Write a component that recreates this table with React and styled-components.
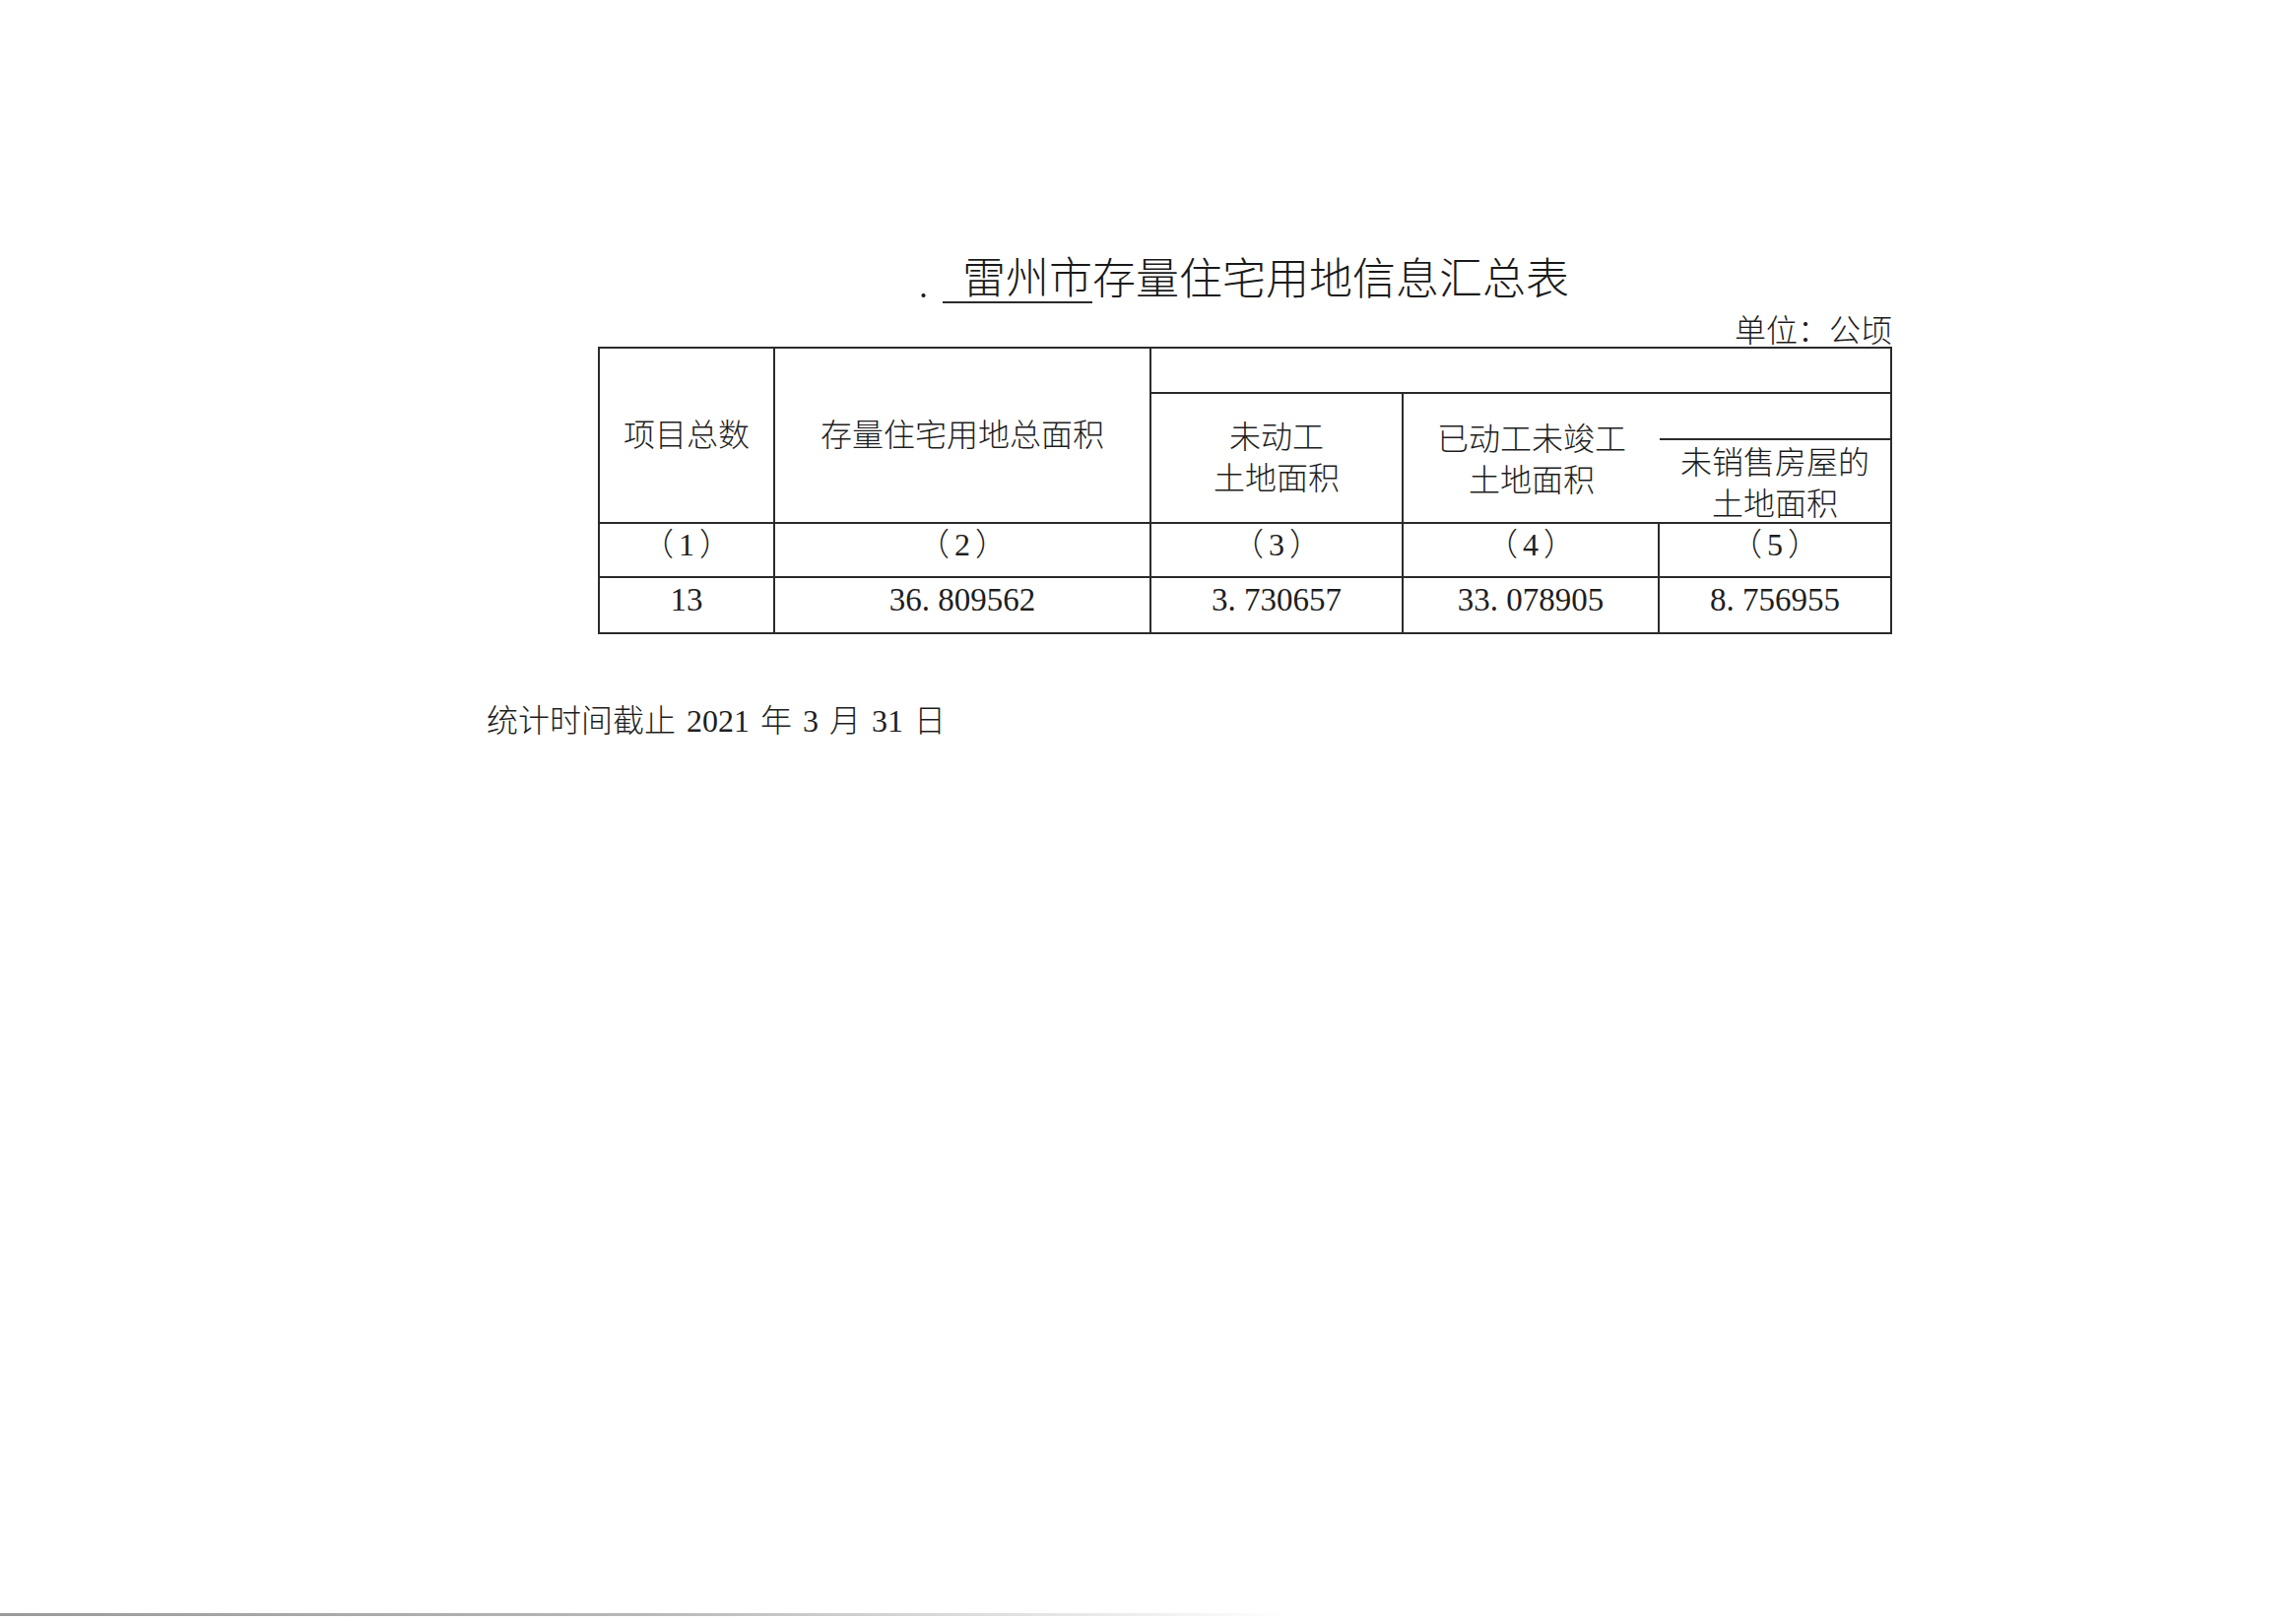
import React from "react";
import styled, { createGlobalStyle } from "styled-components";

const GlobalStyle = createGlobalStyle`
  html, body {
    margin: 0;
    padding: 0;
    background: #ffffff;
  }
  body {
    overflow: hidden;
  }
  * {
    box-sizing: border-box;
  }
`;

const FONT = `"Liberation Serif", "Noto Sans CJK SC", serif`;

const Page = styled.div`
  width: 2331px;
  height: 1646px;
  display: flex;
  flex-direction: column;
  padding: 257px 0 0 494px;
  font-family: ${FONT};
  font-weight: 300;
  color: #1e1e1e;
`;

const Sheet = styled.div`
  width: 1314px;
  margin-left: 113px;
  display: flex;
  flex-direction: column;
`;

const Title = styled.h1`
  margin: 0;
  height: 56px;
  display: flex;
  justify-content: center;
  align-items: center;
  font-size: 44px;
  line-height: 56px;
  font-weight: 300;
  color: #1a1a1a;
`;

const Mark = styled.span`
  font-size: 30px;
  transform: translate(-4px, 6px);
`;

const Underlined = styled.span`
  display: inline-block;
  padding-left: 20px;
  margin-left: -8px;
  line-height: 44px;
  border-bottom: 2px solid #2a2a2a;
`;

const Unit = styled.div`
  height: 39px;
  text-align: right;
  font-size: 32px;
  line-height: 46px;
`;

const Table = styled.div`
  display: grid;
  grid-template-columns: 178px 382px 256px 260px 236px;
  grid-template-rows: 46px 47px 85px 55px 57px;
  border-top: 2px solid #2b2b2b;
  border-left: 2px solid #2b2b2b;
  font-size: 32px;
`;

const Cell = styled.div`
  grid-column: ${(p) => p.$col};
  grid-row: ${(p) => p.$row};
  border-right: ${(p) => (p.$noRight ? "none" : "2px solid #2b2b2b")};
  border-bottom: ${(p) => (p.$noBottom ? "none" : "2px solid #2b2b2b")};
  display: flex;
  flex-direction: column;
  align-items: center;
  justify-content: center;
  text-align: center;
  line-height: 42px;
  padding-top: ${(p) => p.$shift || 0}px;
  padding-bottom: ${(p) => p.$lift || 0}px;
  white-space: nowrap;
`;

const Index = styled.span`
  letter-spacing: 5px;
  margin-right: -5px;
`;

const Num = styled.span`
  font-size: 33px;
`;

const Dot = styled.span`
  display: inline-block;
  width: 0.5em;
  text-align: left;
`;

const Footnote = styled.div`
  margin-top: 68px;
  height: 40px;
  font-size: 32px;
  line-height: 40px;
  word-spacing: 3px;
`;

const ScanEdge = styled.div`
  margin-top: auto;
  margin-left: -494px;
  margin-bottom: 5px;
  width: 1310px;
  height: 3px;
  background: linear-gradient(90deg, #9a9a9a 0%, #b8b8b8 50%, rgba(200, 200, 200, 0) 100%);
`;

function Value({ text }) {
  const [a, b] = text.split(".");
  return (
    <Num>
      {a}
      <Dot>.</Dot>
      {b}
    </Num>
  );
}

const values = [
  { id: 1, text: "13" },
  { id: 2, text: "36.809562" },
  { id: 3, text: "3.730657" },
  { id: 4, text: "33.078905" },
  { id: 5, text: "8.756955" },
];

export default function App() {
  return (
    <>
      <GlobalStyle />
      <Page>
        <Sheet>
          <Title>
            <Mark>．</Mark>
            <Underlined>雷州市</Underlined>
            存量住宅用地信息汇总表
          </Title>
          <Unit>单位：公顷</Unit>
          <Table>
            <Cell $col="1" $row="1 / 4">项目总数</Cell>
            <Cell $col="2" $row="1 / 4">存量住宅用地总面积</Cell>
            <Cell $col="3 / 6" $row="1" />
            <Cell $col="3" $row="2 / 4">
              <span>未动工</span>
              <span>土地面积</span>
            </Cell>
            <Cell $col="4" $row="2 / 4" $noRight $shift={4}>
              <span>已动工未竣工</span>
              <span>土地面积</span>
            </Cell>
            <Cell $col="5" $row="2" />
            <Cell $col="5" $row="3" $shift={4}>
              <span>未销售房屋的</span>
              <span>土地面积</span>
            </Cell>
            {values.map((v) => (
              <Cell key={"h" + v.id} $col={String(v.id)} $row="4" $lift={12}>
                <Index>（{v.id}）</Index>
              </Cell>
            ))}
            {values.map((v) => (
              <Cell key={"v" + v.id} $col={String(v.id)} $row="5" $lift={11}>
                {v.text.includes(".") ? <Value text={v.text} /> : <Num>{v.text}</Num>}
              </Cell>
            ))}
          </Table>
        </Sheet>
        <Footnote>统计时间截止 2021 年 3 月 31 日</Footnote>
        <ScanEdge />
      </Page>
    </>
  );
}
